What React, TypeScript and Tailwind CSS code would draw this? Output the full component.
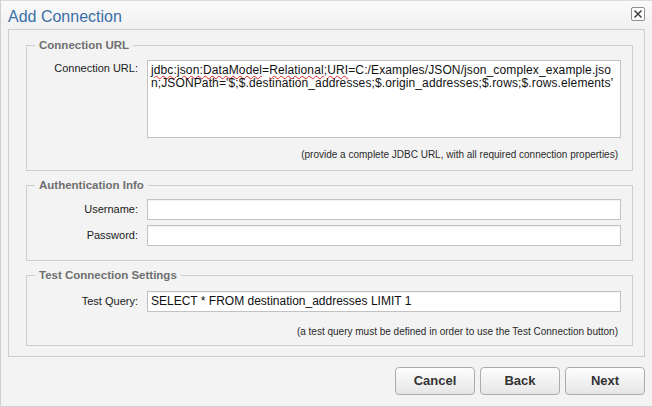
import React from "react";

const FONT = "font-['Liberation_Sans',Arial,sans-serif]";

function Legend({ children }: { children: React.ReactNode }) {
  return (
    <legend className="ml-[8px] px-[4px] text-[11.5px] leading-[14px] font-bold text-[#6f6f6f]">
      {children}
    </legend>
  );
}

function Row({ label, children, className = "" }: { label: string; children: React.ReactNode; className?: string }) {
  return (
    <div className={`flex items-start ${className}`}>
      <div className="w-[111px] shrink-0 text-right text-[11px] leading-[21px] text-[#1a1a1a]">{label}</div>
      <div className="ml-[9px] flex-1">{children}</div>
    </div>
  );
}

function Input({ value = "" }: { value?: string }) {
  return (
    <div className="h-[21px] border border-[#c2c2c2] bg-white px-[3px] text-[12px] leading-[19px] text-[#111] shadow-[inset_0_1px_1px_rgba(0,0,0,0.06)]">
      {value}
    </div>
  );
}

function Button({ children }: { children: React.ReactNode }) {
  return (
    <button className="h-[28px] w-[80px] rounded-[4px] border border-[#acacac] bg-gradient-to-b from-[#fdfdfd] to-[#e6e6e6] text-[13px] font-bold text-[#333] font-['Liberation_Sans',Arial,sans-serif]">
      {children}
    </button>
  );
}

export default function App() {
  const squiggle = "underline decoration-wavy decoration-[#e02020] decoration-1 underline-offset-[1px]";
  return (
    <div className={`${FONT} flex h-[407px] w-[652px] flex-col border-l border-b border-[#cfcfcf] bg-[#f3f3f3]`}>
      {/* Title bar */}
      <div className="flex h-[29px] items-start justify-between bg-gradient-to-b from-[#fafafa] to-[#f1f1f1] border-t border-[#dcdcdc]">
        <div className="pl-[7px] pt-[6px] text-[16px] leading-[20px] text-[#3a6ea8]">Add Connection</div>
        <button className="mr-[7px] mt-[6px] flex h-[14px] w-[14px] items-center justify-center rounded-[2px] border border-[#8f8f8f] bg-white">
          <svg width="10" height="10" viewBox="0 0 10 10">
            <path d="M1.5 1.5 L8.5 8.5 M8.5 1.5 L1.5 8.5" stroke="#444" strokeWidth="1.6" />
          </svg>
        </button>
      </div>

      {/* Panel */}
      <div className="mx-[7px] border border-[#cdcdcd] pl-[17px] pr-[11px] pt-[8px] pb-[10px]">
        <fieldset className="border border-[#cdcdcd] pr-[11px] pb-[8px]">
          <Legend>Connection URL</Legend>
          <div className="mt-[8px] flex items-start">
            <div className="w-[111px] shrink-0 pt-[1px] text-right text-[11px] leading-[14px] text-[#1a1a1a]">Connection URL:</div>
            <div className="ml-[9px] h-[78px] flex-1 border border-[#c2c2c2] bg-white px-[3px] pt-[3px] text-[12px] leading-[13px] tracking-[0.12px] text-[#111] break-all">
              <span className={squiggle}>jdbc:json:DataModel</span>=<span className={squiggle}>Relational;URI</span>=C:/Examples/JSON/json_complex_example.json;JSONPath='$;$.destination_addresses;$.origin_addresses;$.rows;$.rows.elements'
            </div>
          </div>
          <div className="mt-[10px] pr-[3px] text-right text-[10px] leading-[14px] text-[#2a2a2a]">
            (provide a complete JDBC URL, with all required connection properties)
          </div>
        </fieldset>

        <fieldset className="mt-[7px] border border-[#cdcdcd] pr-[11px] pb-[14px]">
          <Legend>Authentication Info</Legend>
          <Row label="Username:" className="mt-[7px]">
            <Input />
          </Row>
          <Row label="Password:" className="mt-[5px]">
            <Input />
          </Row>
        </fieldset>

        <fieldset className="mt-[7px] border border-[#cdcdcd] pr-[11px] pb-[6px]">
          <Legend>Test Connection Settings</Legend>
          <Row label="Test Query:" className="mt-[9px]">
            <Input value="SELECT * FROM destination_addresses LIMIT 1" />
          </Row>
          <div className="mt-[13px] pr-[3px] text-right text-[10px] leading-[14px] text-[#2a2a2a]">
            (a test query must be defined in order to use the Test Connection button)
          </div>
        </fieldset>
      </div>

      {/* Footer buttons */}
      <div className="mt-[10px] flex justify-end gap-[5px] pr-[7px]">
        <Button>Cancel</Button>
        <Button>Back</Button>
        <Button>Next</Button>
      </div>
    </div>
  );
}
